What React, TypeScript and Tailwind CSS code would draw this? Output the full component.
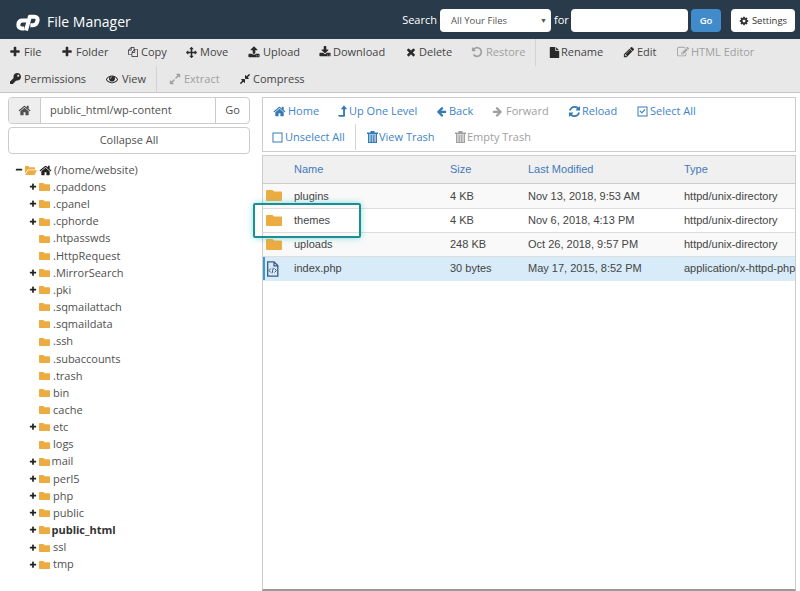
import { useState } from "react";
import { FaKey } from "react-icons/fa";
import clsx from "clsx";

// Icon outlines, all on a 1792 grid
const ICONS = {
  plus: "M1600 736v192q0 40-28 68t-68 28h-416v416q0 40-28 68t-68 28h-192q-40 0-68-28t-28-68v-416h-416q-40 0-68-28t-28-68v-192q0-40 28-68t68-28h416v-416q0-40 28-68t68-28h192q40 0 68 28t28 68v416h416q40 0 68 28t28 68z",
  minus: "M1600 736v192q0 40-28 68t-68 28h-1216q-40 0-68-28t-28-68v-192q0-40 28-68t68-28h1216q40 0 68 28t28 68z",
  times: "M1490 1322q0 40-28 68l-136 136q-28 28-68 28t-68-28l-294-294-294 294q-28 28-68 28t-68-28l-136-136q-28-28-28-68t28-68l294-294-294-294q-28-28-28-68t28-68l136-136q28-28 68-28t68 28l294 294 294-294q28-28 68-28t68 28l136 136q28 28 28 68t-28 68l-294 294 294 294q28 28 28 68z",
  back: "M1664 896v128q0 53-32.5 90.500t-84.500 37.500h-704l293 294q38 36 38 90t-38 90l-75 76q-37 37-90 37-52 0-91-37l-651-652q-37-37-37-90 0-52 37-91l651-650q38-38 91-38 52 0 90 38l75 74q38 38 38 91t-38 91l-293 293h704q52 0 84.500 37.500t32.500 90.500z",
  home: "M1472 992v480q0 26-19 45t-45 19h-384v-384h-256v384h-384q-26 0-45-19t-19-45v-480q0-1 .5-3t.5-3l575-474 575 474q1 2 1 6zm223-69l-62 74q-8 9-21 11h-3q-13 0-21-7l-692-577-692 577q-12 8-24 7-13-2-21-11l-62-74q-8-10-7-23.500t11-21.500l719-599q32-26 76-26t76 26l244 204v-195q0-14 9-23t23-9h192q14 0 23 9t9 23v408l219 182q10 8 11 21.500t-7 23.500z",
  download: "M1344 1344q0-26-19-45t-45-19-45 19-19 45 19 45 45 19 45-19 19-45zm256 0q0-26-19-45t-45-19-45 19-19 45 19 45 45 19 45-19 19-45zm128-224v320q0 40-28 68t-68 28h-1472q-40 0-68-28t-28-68v-320q0-40 28-68t68-28h465l135 136q58 56 136 56t136-56l136-136h464q40 0 68 28t28 68zm-325-569q17 41-14 70l-448 448q-18 19-45 19t-45-19l-448-448q-31-29-14-70 17-39 59-39h256v-448q0-26 19-45t45-19h256q26 0 45 19t19 45v448h256q42 0 59 39z",
  upload: "M1344 1472q0-26-19-45t-45-19-45 19-19 45 19 45 45 19 45-19 19-45zm256 0q0-26-19-45t-45-19-45 19-19 45 19 45 45 19 45-19 19-45zm128-224v320q0 40-28 68t-68 28h-1472q-40 0-68-28t-28-68v-320q0-40 28-68t68-28h427q21 56 70.500 92t110.500 36h256q61 0 110.500-36t70.500-92h427q40 0 68 28t28 68zm-325-648q-17 40-59 40h-256v448q0 26-19 45t-45 19h-256q-26 0-45-19t-19-45v-448h-256q-42 0-59-40-17-39 14-69l448-448q18-19 45-19t45 19l448 448q31 30 14 69z",
  eye: "M1664 960q-152-236-381-353 61 104 61 225 0 185-131.500 316.500t-316.500 131.500-316.500-131.500-131.500-316.500q0-121 61-225-229 117-381 353 133 205 333.500 326.500t434.500 121.500 434.500-121.500 333.500-326.500zm-720-384q0-20-14-34t-34-14q-125 0-214.500 89.500t-89.500 214.500q0 20 14 34t34 14 34-14 14-34q0-86 61-147t147-61q20 0 34-14t14-34zm848 384q0 34-20 69-140 230-376.500 368.500t-499.500 138.500-499.500-139-376.500-368q-20-35-20-69t20-69q140-229 376.500-368t499.500-139 499.500 139 376.500 368q20 35 20 69z",
  pencil: "M491 1536l91-91-235-235-91 91v107h128v128h107zm523-928q0-22-22-22-10 0-17 7l-542 542q-7 7-7 17 0 22 22 22 10 0 17-7l542-542q7-7 7-17zm-54-192l416 416-832 832h-416v-416zm683 96q0 53-37 90l-166 166-416-416 166-165q36-38 90-38 53 0 91 38l235 234q37 39 37 91z",
  pencilSquare: "M888 1184l116-116-152-152-116 116v56h96v96h56zm440-720q-16-16-33 1l-350 350q-17 17-1 33t33-1l350-350q17-17 1-33zm80 594v190q0 119-84.500 203.500t-203.500 84.500h-832q-119 0-203.500-84.500t-84.500-203.500v-832q0-119 84.500-203.500t203.500-84.500h832q63 0 117 25 15 7 18 23 3 17-9 29l-49 49q-14 14-32 8-23-6-45-6h-832q-66 0-113 47t-47 113v832q0 66 47 113t113 47h832q66 0 113-47t47-113v-126q0-13 9-22l64-64q15-15 35-7t20 29zm-96-738l288 288-672 672h-288v-288zm444 132l-92 92-288-288 92-92q28-28 68-28t68 28l152 152q28 28 28 68t-28 68z",
  arrows: "M1792 896q0 26-19 45l-256 256q-19 19-45 19t-45-19-19-45v-128h-384v384h128q26 0 45 19t19 45-19 45l-256 256q-19 19-45 19t-45-19l-256-256q-19-19-19-45t19-45 45-19h128v-384h-384v128q0 26-19 45t-45 19-45-19l-256-256q-19-19-19-45t19-45l256-256q19-19 45-19t45 19 19 45v128h384v-384h-128q-26 0-45-19t-19-45 19-45l256-256q19-19 45-19t45 19l256 256q19 19 19 45t-19 45-45 19h-128v384h384v-128q0-26 19-45t45-19 45 19l256 256q19 19 19 45z",
  undo: "M1664 896q0 156-61 298t-164 245-245 164-298 61q-172 0-327-72.500t-264-204.500q-7-10-6.500-22.500t8.500-20.500l137-138q10-9 25-9 16 2 23 12 73 95 179 147t225 52q104 0 198.500-40.500t163.500-109.500 109.500-163.500 40.500-198.500-40.500-198.500-109.500-163.500-163.500-109.500-198.500-40.500q-98 0-188 35.500t-160 101.500l137 138q31 30 14 69-17 40-59 40h-448q-26 0-45-19t-19-45v-448q0-42 40-59 39-17 69 14l130 129q107-101 244.500-156.500t284.500-55.500q156 0 298 61t245 164 164 245 61 298z",
  expand: "M883 1056q0 13-10 23l-332 332 144 144q19 19 19 45t-19 45-45 19h-448q-26 0-45-19t-19-45v-448q0-26 19-45t45-19 45 19l144 144 332-332q10-10 23-10t23 10l114 114q10 10 10 23zm781-864v448q0 26-19 45t-45 19-45-19l-144-144-332 332q-10 10-23 10t-23-10l-114-114q-10-10-10-23t10-23l332-332-144-144q-19-19-19-45t19-45 45-19h448q26 0 45 19t19 45z",
  compress: "M896 960v448q0 26-19 45t-45 19-45-19l-144-144-332 332q-10 10-23 10t-23-10l-114-114q-10-10-10-23t10-23l332-332-144-144q-19-19-19-45t19-45 45-19h448q26 0 45 19t19 45zm755-672q0 13-10 23l-332 332 144 144q19 19 19 45t-19 45-45 19h-448q-26 0-45-19t-19-45v-448q0-26 19-45t45-19 45 19l144 144 332-332q10-10 23-10t23 10l114 114q10 10 10 23z",
  copy: "M1696 384q40 0 68 28t28 68v1216q0 40-28 68t-68 28h-960q-40 0-68-28t-28-68v-288h-544q-40 0-68-28t-28-68v-672q0-40 20-88t48-76l408-408q28-28 76-48t88-20h416q40 0 68 28t28 68v328q68-40 128-40h416zm-544 213l-299 299h299v-299zm-640-384l-299 299h299v-299zm196 647l316-316v-416h-384v416q0 40-28 68t-68 28h-416v640h512v-256q0-40 20-88t48-76zm956 804v-1152h-384v416q0 40-28 68t-68 28h-416v640h896z",
  file: "M1152 512v-472q22 14 36 28l408 408q14 14 28 36h-472zm-128 32q0 40 28 68t68 28h544v1056q0 40-28 68t-68 28h-1344q-40 0-68-28t-28-68v-1600q0-40 28-68t68-28h800v544z",
  cog: "M1152 896q0-106-75-181t-181-75-181 75-75 181 75 181 181 75 181-75 75-181zm512-109v222q0 12-8 23t-20 13l-185 28q-19 54-39 91 35 50 107 138 10 12 10 25t-9 23q-27 37-99 108t-94 71q-12 0-26-9l-138-108q-44 23-91 38-16 136-29 186-7 28-36 28h-222q-14 0-24.500-8.500t-11.500-21.500l-28-184q-49-16-90-37l-141 107q-10 9-25 9-14 0-25-11-126-114-165-168-7-10-7-23 0-12 8-23 15-21 51-66.500t54-70.500q-27-50-41-99l-183-27q-13-2-21-12.500t-8-23.500v-222q0-12 8-23t19-13l186-28q14-46 39-92-40-57-107-138-10-12-10-24 0-10 9-23 26-36 98.500-107.500t94.500-71.500q13 0 26 10l138 107q44-23 91-38 16-136 29-186 7-28 36-28h222q14 0 24.500 8.500t11.500 21.500l28 184q49 16 90 37l142-107q9-9 24-9 13 0 25 10 129 119 165 170 7 8 7 22 0 12-8 23-15 21-51 66.500t-54 70.500q26 50 41 98l183 28q13 2 21 12.500t8 23.500z",
  refresh: "M1639 1056q0 5-1 7-64 268-268 434.500t-478 166.500q-146 0-282.500-55t-243.500-157l-129 129q-19 19-45 19t-45-19-19-45v-448q0-26 19-45t45-19h448q26 0 45 19t19 45-19 45l-137 137q71 66 161 102t187 36q134 0 250-65t186-179q11-17 53-117 8-23 30-23h192q13 0 22.500 9.500t9.500 22.500zm25-800v448q0 26-19 45t-45 19h-448q-26 0-45-19t-19-45 19-45l138-138q-148-137-349-137-134 0-250 65t-186 179q-11 17-53 117-8 23-30 23h-199q-13 0-22.500-9.500t-9.500-22.500v-7q65-268 270-434.500t480-166.500q146 0 284 55.500t245 156.500l130-129q19-19 45-19t45 19 19 45z",
  levelUp: "M200 1500h710v-860h-260q-80 0-40-80l380-450q50-50 100 0l380 450q40 80-40 80h-240v1020q0 90-90 90h-720q-30 0-50-24l-170-170q-30-56 20-56z",
  square: "M80 80h1632v1632h-1632zM240 240v1312h1312v-1312z",
  checkSquare: "M80 80h1632v1632h-1632zM240 240v1312h1312v-1312zM400 850l130-130 250 250 480-480 130 130-610 610z",
};

type IconName = keyof typeof ICONS;

function Icon({ name, className }: { name: IconName; className?: string }) {
  return (
    <svg viewBox="0 0 1792 1792" fill="currentColor" fillRule={name === "square" || name === "checkSquare" ? "evenodd" : "nonzero"} className={clsx("shrink-0", className)}>
      <path d={ICONS[name]} />
    </svg>
  );
}

function Logo() {
  return (
    <svg viewBox="0 0 72 50" className="mt-[3px] h-[17px] w-6" fill="none" stroke="white" strokeWidth="12" strokeLinejoin="round">
      <path d="M34 19H20C11 19 7.500 24 7 31S11 43 18 43h7" />
      <path d="M30 49L41.500 8H55c8 0 11 5 9.500 12S59 33 50 33h-7" />
    </svg>
  );
}

function TrashIcon() {
  return (
    <svg viewBox="0 0 11 12" className="h-3 w-[11px] shrink-0" fill="currentColor">
      <path d="M3.500 0h4v1.500H11V3H0V1.500h3.500z" />
      <path d="M1 3h9v9H1z" opacity="0.45" />
      <path d="M1 3h1v9H1zM3.700 4h1v7h-1zM6.300 4h1v7h-1zM9 3h1v9H9zM1 11h9v1H1z" />
    </svg>
  );
}

function FolderIcon({ className }: { className?: string }) {
  return (
    <svg viewBox="0 0 16 12" preserveAspectRatio="none" fill="#edac41" className={clsx("shrink-0", className)}>
      <path d="M1 0h5.200q.8 0 1.200.7l.7 1h6.900q1 0 1 1v8.300q0 1-1 1H1q-1 0-1-1V1q0-1 1-1z" />
    </svg>
  );
}

interface Action {
  label: string;
  icon: IconName | "key" | "trash";
  width: string;
  slot: string;
  size?: string;
  disabled?: boolean;
  flip?: boolean;
  divider?: string;
}

const toolbar: Action[][] = [
  [
    { label: "File", icon: "plus", width: "w-[51px]", slot: "w-3.5", size: "size-3 -ml-px" },
    { label: "Folder", icon: "plus", width: "w-[67px]", slot: "w-[15px]", size: "size-3" },
    { label: "Copy", icon: "copy", width: "w-[58px]", slot: "w-[13px]", size: "size-2.5" },
    { label: "Move", icon: "arrows", width: "w-[62px]", slot: "w-3.5" },
    { label: "Upload", icon: "upload", width: "w-[71px]", slot: "w-[15px]", size: "size-3" },
    { label: "Download", icon: "download", width: "w-[87px]", slot: "w-3.5", size: "size-3" },
    { label: "Delete", icon: "times", width: "w-[66px]", slot: "w-[13px]", size: "size-3 -ml-px" },
    { label: "Restore", icon: "undo", width: "w-[63px]", slot: "w-3.5", size: "size-3 -ml-px", disabled: true },
    { label: "Rename", icon: "file", width: "w-[88px]", slot: "w-3", divider: "border-l pl-[13px]" },
    { label: "Edit", icon: "pencil", width: "w-[54px]", slot: "w-3.5", size: "size-3" },
    { label: "HTML Editor", icon: "pencilSquare", width: "w-20", slot: "w-3.5", size: "size-3", disabled: true },
  ],
  [
    { label: "Permissions", icon: "key", width: "w-24", slot: "w-3.5" },
    { label: "View", icon: "eye", width: "w-[50px]", slot: "w-4", size: "size-3" },
    { label: "Extract", icon: "expand", width: "w-[84px]", slot: "w-3.5", size: "size-3 -ml-px", disabled: true, divider: "border-l pl-[13px]" },
    { label: "Compress", icon: "compress", width: "w-20", slot: "w-[13px]", size: "size-3 -ml-px" },
  ],
];

const navigation: Action[][] = [
  [
    { label: "Home", icon: "home", width: "w-[66px]", slot: "w-[15px]", size: "size-[13px]" },
    { label: "Up One Level", icon: "levelUp", width: "w-[98px]", slot: "w-2.5", size: "size-3 -ml-0.5" },
    { label: "Back", icon: "back", width: "w-14", slot: "w-3", size: "size-[11px] -ml-px" },
    { label: "Forward", icon: "back", width: "w-[76px]", slot: "w-[13px]", size: "size-[11px] -ml-px", disabled: true, flip: true },
    { label: "Reload", icon: "refresh", width: "w-[69px]", slot: "w-[13px]", size: "size-[13px] -ml-[1.500px]" },
    { label: "Select All", icon: "checkSquare", width: "w-20", slot: "w-3", size: "size-[11px] -ml-px" },
  ],
  [
    { label: "Unselect All", icon: "square", width: "w-[82px]", slot: "w-3", size: "size-[11px] -ml-px" },
    { label: "View Trash", icon: "trash", width: "w-[100px]", slot: "w-3", divider: "border-l pl-[11px]" },
    { label: "Empty Trash", icon: "trash", width: "w-20", slot: "w-3", disabled: true },
  ],
];

interface TreeNode {
  name: string;
  expandable?: boolean;
  tight?: boolean;
  current?: boolean;
}

const tree: TreeNode[] = [
  { name: ".cpaddons", expandable: true },
  { name: ".cpanel", expandable: true },
  { name: ".cphorde", expandable: true },
  { name: ".htpasswds" },
  { name: ".HttpRequest" },
  { name: ".MirrorSearch", expandable: true },
  { name: ".pki", expandable: true },
  { name: ".sqmailattach" },
  { name: ".sqmaildata" },
  { name: ".ssh" },
  { name: ".subaccounts" },
  { name: ".trash" },
  { name: "bin" },
  { name: "cache" },
  { name: "etc", expandable: true },
  { name: "logs" },
  { name: "mail", expandable: true, tight: true },
  { name: "perl5", expandable: true },
  { name: "php", expandable: true },
  { name: "public", expandable: true },
  { name: "public_html", expandable: true, tight: true, current: true },
  { name: "ssl", expandable: true },
  { name: "tmp", expandable: true },
];

const files = [
  { name: "plugins", size: "4 KB", modified: "Nov 13, 2018, 9:53 AM", type: "httpd/unix-directory" },
  { name: "themes", size: "4 KB", modified: "Nov 6, 2018, 4:13 PM", type: "httpd/unix-directory" },
  { name: "uploads", size: "248 KB", modified: "Oct 26, 2018, 9:57 PM", type: "httpd/unix-directory" },
  { name: "index.php", size: "30 bytes", modified: "May 17, 2015, 8:52 PM", type: "application/x-httpd-php" },
];

function ActionButton({ action, iconColor }: { action: Action; iconColor: string }) {
  return (
    <button
      className={clsx(
        "flex h-full shrink-0 items-center border-[#d4d4d4] whitespace-nowrap",
        action.width,
        action.divider,
        action.disabled && "text-[#a0a0a0]"
      )}
    >
      <span className={clsx("flex shrink-0 items-center", action.slot, !action.disabled && iconColor)}>
        {action.icon === "key" ? (
          <FaKey className="size-[11px]" />
        ) : action.icon === "trash" ? (
          <TrashIcon />
        ) : (
          <Icon name={action.icon} className={clsx(action.size ?? "size-[11px]", action.flip && "-scale-x-100")} />
        )}
      </span>
      {action.label}
    </button>
  );
}

function Header() {
  return (
    <header className="flex h-[39px] items-center bg-[#293a4a] pt-0.5 pr-[5px] pl-4 text-white">
      <Logo />
      <h1 className="mt-[3px] ml-[7px] text-sm">File Manager</h1>
      <div className="ml-auto flex h-[23px] items-center">
        <label className="mr-[3px] text-[11px]">Search</label>
        <button className="flex h-[23px] w-[111px] items-center justify-between rounded-sm bg-white pt-0.5 pr-1 pl-[11px] text-[9.500px] text-[#555]">
          All Your Files
          <span className="text-[7px]">▼</span>
        </button>
        <label className="w-5 pl-[3px] text-[11px]">for</label>
        <input className="h-[23px] w-[117px] rounded-sm bg-white px-2 text-[11px] text-[#333]" />
        <button className="ml-[3px] h-[23px] w-[30px] rounded-sm bg-[#428bca] pt-px text-[9.500px] font-semibold">Go</button>
        <button className="ml-2.5 flex h-[23px] w-16 items-center justify-center gap-[3px] rounded-sm bg-white pt-px text-[9.500px] text-[#333]">
          <Icon name="cog" className="size-2.5" />
          Settings
        </button>
      </div>
    </header>
  );
}

function Sidebar() {
  const [path, setPath] = useState("public_html/wp-content");

  return (
    <aside className="w-[242px] text-[11px] text-[#505050]">
      <div className="flex h-[27px] overflow-hidden rounded-sm border border-[#ccc]">
        <span className="flex w-8 items-center justify-center border-r border-[#ccc] bg-[#eee]">
          <Icon name="home" className="size-[13px]" />
        </span>
        <input className="w-[175px] border-r border-[#ccc] pl-[9px]" value={path} onChange={(e) => setPath(e.target.value)} />
        <button className="flex-1">Go</button>
      </div>
      <button className="mt-[3px] h-[27px] w-full rounded-sm border border-[#ccc]">Collapse All</button>
      <ul className="mt-[7.500px]">
        <li className="flex h-[17.170px] items-center pl-[7px]">
          <Icon name="minus" className="size-2 text-[#222]" />
          <svg viewBox="0 0 24 16" className="ml-0.5 h-[9px] w-3 shrink-0" preserveAspectRatio="none" fill="#edac41">
            <path d="M1 0h6l2 2h10q1 0 1 1v3H6L0 13V1q0-1 1-1zM6.500 7.500H24L19 16H0z" />
          </svg>
          <Icon name="home" className="ml-0.5 size-[13px] text-[#222]" />
          <span className="ml-0.5">(/home/website)</span>
        </li>
        {tree.map((node) => (
          <li key={node.name} className="flex h-[17.170px] items-center pl-[21px]">
            <span className="w-2.5">{node.expandable && <Icon name="plus" className="size-2 text-[#222]" />}</span>
            <FolderIcon className="h-2 w-[11px]" />
            <span className={clsx(node.tight ? "ml-[1.500px]" : "ml-[3px]", node.current && "font-bold text-[#333]")}>{node.name}</span>
          </li>
        ))}
      </ul>
    </aside>
  );
}

function FileTable() {
  const columns = "grid h-full grid-cols-[31px_156px_78px_156px_1fr] items-center";

  return (
    <div className="mt-[3px] h-[436px] border border-b-2 border-[#ccc] border-b-[#999] font-['Liberation_Sans'] text-[11px] text-[#444]">
      <div className="h-[28.400px] border-b border-[#ccc] bg-[#f0f0f0] text-[#4479ba]">
        <div className={columns}>
          <span />
          <span>Name</span>
          <span>Size</span>
          <span>Last Modified</span>
          <span>Type</span>
        </div>
      </div>
      {files.map((file, i) => {
        const selected = file.name === "index.php";
        return (
          <div
            key={file.name}
            className={clsx(
              "relative h-[24.200px] border-b",
              selected ? "border-[#d7ecf8] bg-[#d7ecf8]" : "border-[#ddd]",
              i % 2 === 0 && "bg-[#f9f9f9]"
            )}
          >
            {selected && <div className="absolute inset-y-0 left-0 w-0.5 bg-[#3a9bd6]" />}
            <div className={columns}>
              <span className="pl-[3px]">
                {selected ? (
                  <svg viewBox="0 0 13 16" className="h-4 w-[13px]" fill="none" stroke="#3d5a80" strokeWidth="1.300">
                    <path d="M1.700.8h6.300l3.800 3.800v10.500H1.700zM8 .8v4h4" />
                    <path d="M4.800 7.500L3 9.500l1.800 2M8.600 7.500l1.800 2-1.800 2M7.300 6.800l-1.200 5.400" strokeWidth="1" />
                  </svg>
                ) : (
                  <FolderIcon className="h-[11px] w-4" />
                )}
              </span>
              <span>{file.name}</span>
              <span>{file.size}</span>
              <span>{file.modified}</span>
              <span className="whitespace-nowrap">{file.type}</span>
            </div>
            {file.name === "themes" && (
              <div className="absolute -top-[6px] -left-[10px] z-10 h-[35px] w-[108px] rounded-xs border-2 border-[#1b8f92] shadow-[0_0_6px_rgba(60,200,205,0.6)]" />
            )}
          </div>
        );
      })}
    </div>
  );
}

export default function App() {
  return (
    <div className="h-[591px] w-[800px] overflow-hidden bg-white font-['Open_Sans',sans-serif]">
      <Header />
      <nav className="h-[54px] border-b border-[#c4c4c4] bg-[#e8e8e8] pl-2.5 text-[11px] text-[#444]">
        {toolbar.map((row, i) => (
          <div key={i} className="flex h-[26.500px]">
            {row.map((action) => (
              <ActionButton key={action.label} action={action} iconColor="text-[#2a2a2a]" />
            ))}
          </div>
        ))}
      </nav>
      <main className="flex gap-3 pt-1 pl-2">
        <Sidebar />
        <section className="w-[534px]">
          <div className="h-[55px] border border-[#ccc] pl-2.5 text-[11px] text-[#4083c8]">
            {navigation.map((row, i) => (
              <div key={i} className="flex h-[26px]">
                {row.map((action) => (
                  <ActionButton key={action.label} action={action} iconColor="text-[#337ab7]" />
                ))}
              </div>
            ))}
          </div>
          <FileTable />
        </section>
      </main>
    </div>
  );
}
